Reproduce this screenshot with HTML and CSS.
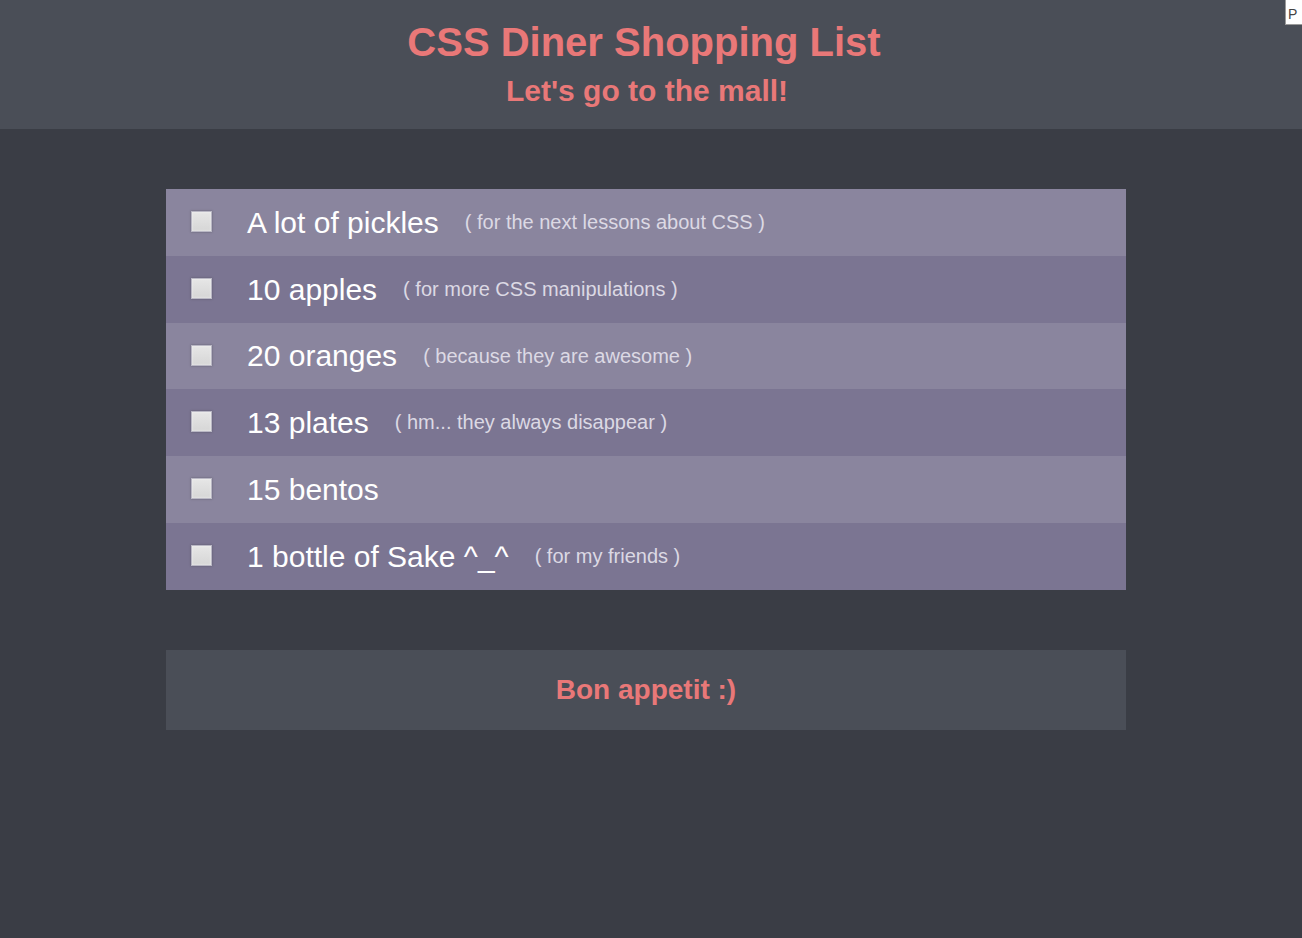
FILE: index.html
```html
<!DOCTYPE html>
<html lang="en">
<head>
<meta charset="utf-8">
<title>CSS Diner Shopping List</title>
<link rel="stylesheet" href="styles.css">
</head>
<body>
<header class="header">
  <h1 class="title">CSS Diner Shopping List</h1>
  <h2 class="subtitle">Let's go to the mall!</h2>
</header>
<main class="main">
  <ul class="list">
    <li class="item"><span class="check"></span><span class="name">A lot of pickles</span><span class="note">( for the next lessons about CSS )</span></li>
    <li class="item"><span class="check"></span><span class="name">10 apples</span><span class="note">( for more CSS manipulations )</span></li>
    <li class="item"><span class="check"></span><span class="name">20 oranges</span><span class="note">( because they are awesome )</span></li>
    <li class="item"><span class="check"></span><span class="name">13 plates</span><span class="note">( hm... they always disappear )</span></li>
    <li class="item"><span class="check"></span><span class="name">15 bentos</span></li>
    <li class="item"><span class="check"></span><span class="name">1 bottle of Sake ^_^</span><span class="note">( for my friends )</span></li>
  </ul>
  <footer class="footer">Bon appetit :)</footer>
</main>
<div class="corner">P</div>
</body>
</html>
```

FILE: styles.css
```css
html, body {
  margin: 0;
  padding: 0;
}
body {
  background: #3a3d45;
  font-family: "Liberation Sans", Arial, sans-serif;
  min-height: 938px;
}
.header {
  background: #4a4e57;
  height: 129px;
  box-sizing: border-box;
  padding: 19px 14px 0 0;
  text-align: center;
  color: #e97878;
}
.title {
  margin: 0;
  font-size: 40px;
  line-height: 46px;
  font-weight: bold;
}
.subtitle {
  margin: 8px 0 0 6px;
  font-size: 30px;
  line-height: 36px;
  font-weight: bold;
}
.main {
  width: 960px;
  margin: 60px 0 0 166px;
}
.list {
  list-style: none;
  margin: 0;
  padding: 0;
}
.item {
  height: 67px;
  display: flex;
  align-items: center;
  padding-left: 25px;
  background: #8a859e;
  color: #ffffff;
}
.item:nth-child(even) {
  background: #7b7592;
}
.item:nth-child(3) {
  height: 66px;
}
.check {
  width: 19px;
  height: 19px;
  background: linear-gradient(#e6e6e6, #d6d6d6);
  border: 1px solid #b9b7c4;
  box-shadow: inset 0 0 2px #f5f5f5, 0 0 2px rgba(60, 60, 70, 0.5);
  margin-right: 35px;
  margin-top: -2px;
}
.name {
  font-size: 30px;
  line-height: 34px;
}
.note {
  font-size: 20px;
  color: #dcd9e4;
  margin-left: 26px;
}
.footer {
  margin-top: 60px;
  height: 80px;
  background: #4a4e57;
  color: #e97878;
  font-size: 28px;
  font-weight: bold;
  display: flex;
  align-items: center;
  justify-content: center;
}
.corner {
  position: absolute;
  top: 0;
  right: 0;
  width: 14px;
  height: 24px;
  background: #ffffff;
  border-left: 1px solid #9a9a9a;
  border-bottom: 1px solid #9a9a9a;
  color: #444;
  font-size: 14px;
  line-height: 28px;
  padding-left: 2px;
  overflow: hidden;
}
```
